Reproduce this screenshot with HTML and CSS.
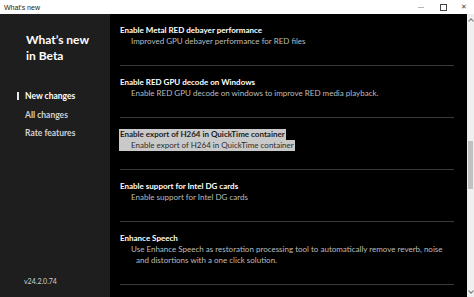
FILE: index.html
```html
<!DOCTYPE html>
<html lang="en">
<head>
    <meta charset="UTF-8">
    <title>What's new</title>
    <link rel="stylesheet" href="styles.css">
</head>
<body>

<div class="window">
    <div class="titlebar">
        <span class="titlebar-text">What's new</span>
        <div class="controls">
            <span class="ctl ctl-min"></span>
            <span class="ctl ctl-max"></span>
            <span class="ctl ctl-close">&#x2715;</span>
        </div>
    </div>

    <div class="app">
        <div class="sidebar">
            <h1 class="sidebar-title">What’s new<br>in Beta</h1>
            <ul class="nav">
                <li class="nav-item active">New changes</li>
                <li class="nav-item">All changes</li>
                <li class="nav-item">Rate features</li>
            </ul>
            <div class="version">v24.2.0.74</div>
        </div>

        <div class="content">
            <div class="feature">
                <div class="feature-title">Enable Metal RED debayer performance</div>
                <div class="feature-desc">Improved GPU debayer performance for RED files</div>
            </div>
            <div class="feature">
                <div class="feature-title">Enable RED GPU decode on Windows</div>
                <div class="feature-desc">Enable RED GPU decode on windows to improve RED media playback.</div>
            </div>
            <div class="feature selected">
                <div class="feature-title">Enable export of H264 in QuickTime container</div>
                <div class="feature-desc">Enable export of H264 in QuickTime container</div>
            </div>
            <div class="feature">
                <div class="feature-title">Enable support for Intel DG cards</div>
                <div class="feature-desc">Enable support for Intel DG cards</div>
            </div>
            <div class="feature">
                <div class="feature-title">Enhance Speech</div>
                <div class="feature-desc">Use Enhance Speech as restoration processing tool to automatically remove reverb, noise and distortions with a one click solution.</div>
            </div>
        </div>

        <div class="scrollbar">
            <span class="arrow arrow-up"></span>
            <span class="thumb"></span>
            <span class="arrow arrow-down"></span>
        </div>
    </div>
</div>

</body>
</html>
```

FILE: styles.css
```css
/* window frame */
body {
    margin: 0;
    font-family: Lato, "Open Sans", sans-serif;
    background-color: #ffffff;
}
.window {
    width: 474px;
    height: 297px;
    display: flex;
    flex-direction: column;
    overflow: hidden;
}
.titlebar {
    height: 14px;
    display: flex;
    justify-content: space-between;
    align-items: center;
    background-color: #ffffff;
    padding-left: 4px;
}
.titlebar-text {
    font-family: "Liberation Sans", sans-serif;
    font-size: 7px;
    color: #222;
}
.controls {
    display: flex;
    align-items: center;
    height: 14px;
}
.ctl {
    width: 22px;
    display: flex;
    justify-content: center;
    align-items: center;
}
.ctl-min::before {
    content: "";
    width: 6px;
    height: 1px;
    background-color: #b5b5b5;
}
.ctl-max::before {
    content: "";
    width: 5px;
    height: 5px;
    border: 1px solid #444;
}
.ctl-close {
    font-family: "DejaVu Sans", sans-serif;
    font-size: 7px;
    color: #444;
    width: 20px;
}

/* main area */
.app {
    flex: 1;
    display: flex;
    min-height: 0;
}
.sidebar {
    width: 110px;
    background-color: #1e1e1e;
    padding: 18px 0 12px 25px;
    box-sizing: border-box;
    display: flex;
    flex-direction: column;
}
.sidebar-title {
    margin: 0;
    font-size: 12px;
    line-height: 16px;
    font-weight: bold;
    color: #ffffff;
    margin-left: 1px;
}
.nav {
    list-style: none;
    margin: 23px 0 0 0;
    padding: 0;
    flex: 1;
}
.nav-item {
    position: relative;
    font-size: 8.5px;
    line-height: 18.5px;
    font-weight: bold;
    color: #d2d2d2;
}
.nav-item.active {
    color: #ffffff;
}
.nav-item.active::before {
    content: "";
    position: absolute;
    left: -8px;
    top: 5px;
    width: 2px;
    height: 8px;
    background-color: #e8e8e8;
}
.version {
    font-size: 7px;
    color: #d0d0d0;
    margin-left: -1px;
}

.content {
    flex: 1;
    background-color: #000000;
    padding-left: 10px;
    overflow: hidden;
}
.feature {
    margin-right: 13px;
    padding: 11px 0 18px 0;
    border-bottom: 1px solid #3a3a3a;
}
.feature-title {
    font-size: 8px;
    line-height: 11px;
    font-weight: bold;
    color: #ffffff;
}
.feature-desc {
    font-size: 8px;
    line-height: 11px;
    color: #bdbdbd;
    padding-left: 16px;
    text-indent: -5px;
}
.feature.selected .feature-title,
.feature.selected .feature-desc {
    width: fit-content;
    background-color: #c9c9c9;
    color: #1c1c1c;
    margin-left: -1px;
    padding-right: 1px;
}
.feature.selected .feature-title {
    padding-left: 1px;
}
.feature.selected .feature-desc {
    padding-left: 17px;
    color: #2e2e2e;
}

/* scrollbar */
.scrollbar {
    width: 7px;
    background-color: #f0f0f0;
    display: flex;
    flex-direction: column;
    align-items: center;
}
.arrow {
    width: 3px;
    height: 3px;
    border-left: 1px solid #777;
    border-top: 1px solid #777;
}
.arrow-up {
    margin-top: 5px;
    transform: rotate(45deg);
}
.arrow-down {
    margin-top: auto;
    margin-bottom: 4px;
    transform: rotate(225deg);
}
.thumb {
    width: 5px;
    height: 48px;
    background-color: #c2c2c2;
    margin-top: 118px;
}
```
